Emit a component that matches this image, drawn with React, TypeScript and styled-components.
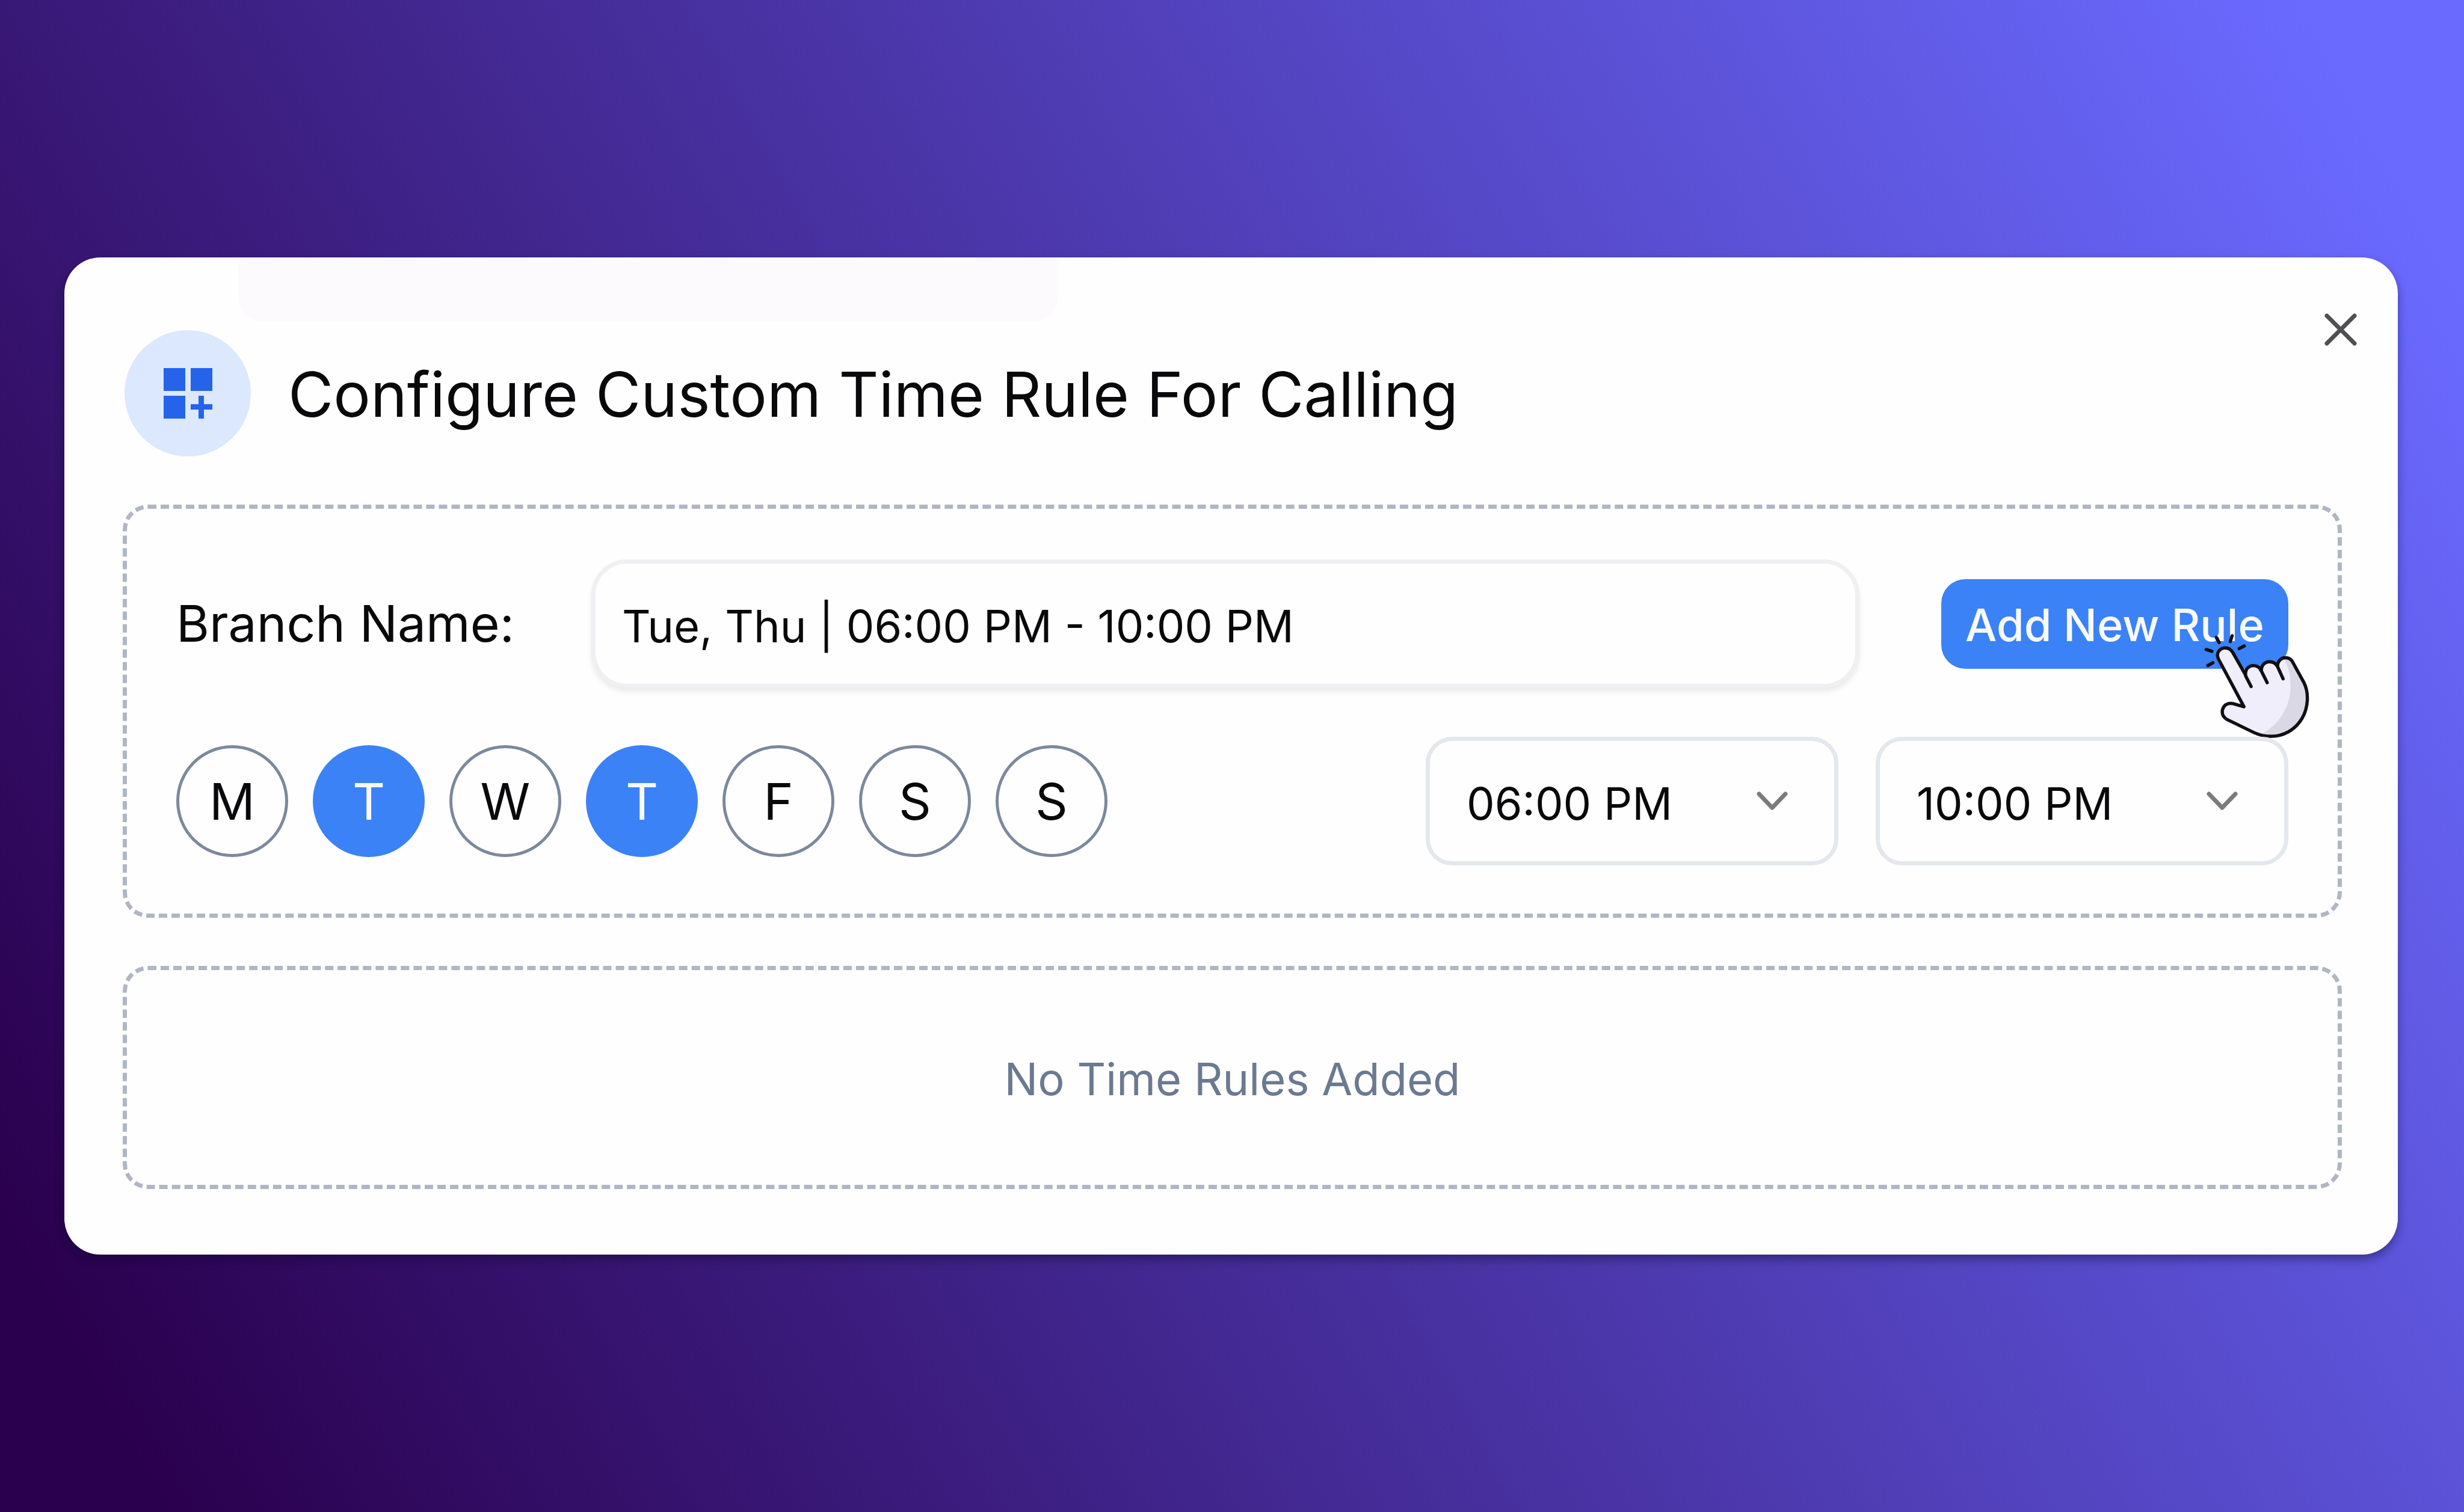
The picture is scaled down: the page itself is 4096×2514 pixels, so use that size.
import { useState } from "react";
import styled, { createGlobalStyle, css } from "styled-components";

const colors = {
  blue: "#3b82f6",
  deepBlue: "#2563eb",
  paleBlue: "#dbe8fe",
  ink: "#09090b",
  slate: "#6b7a90",
  dash: "#b0b6c2",
  line: "#e4e8ec",
  surface: "#fefefe",
};

const GlobalStyle = createGlobalStyle`
  *, *::before, *::after { box-sizing: border-box; }
  body { margin: 0; }
  body, button, input, select { font-family: Inter, "Liberation Sans", sans-serif; }
`;

const Page = styled.main`
  min-height: 100vh;
  display: flex;
  flex-direction: column;
  justify-content: center;
  padding: 80px 110px 80px 107px;
  background: linear-gradient(61deg, #2a004e 5%, #6a6aff 95%);
`;

const Dialog = styled.section`
  position: relative;
  display: flex;
  flex-direction: column;
  gap: 80px;
  padding: 121px 93px 109px 97px;
  border-radius: 60px;
  background: ${colors.surface};
  color: ${colors.ink};
  box-shadow: 0 8px 16px rgba(10, 10, 40, 0.4);
`;

const Tint = styled.div`
  position: absolute;
  top: 0;
  left: 289px;
  width: 1363px;
  height: 106px;
  border-radius: 0 0 40px 40px;
  background: #fcfafd;
`;

const CloseButton = styled.button`
  position: absolute;
  top: 92px;
  right: 67px;
  display: flex;
  padding: 0;
  border: 0;
  background: none;
  color: #505052;
  cursor: pointer;
`;

const Header = styled.header`
  display: flex;
  align-items: center;
  gap: 62px;
  padding: 0 3px;
`;

const Badge = styled.span`
  display: flex;
  align-items: center;
  justify-content: center;
  width: 210px;
  height: 210px;
  border-radius: 50%;
  background: ${colors.paleBlue};
  color: ${colors.deepBlue};
`;

const Title = styled.h1`
  margin: 0;
  padding-top: 4px;
  font-size: 103px;
  line-height: 132px;
  font-weight: 400;
`;

const Panel = styled.div`
  display: flex;
  flex-direction: column;
  gap: 81px;
  padding: 84px 82px 80px;
  border: 7px dashed ${colors.dash};
  border-radius: 42px;
`;

const EmptyPanel = styled(Panel)`
  align-items: center;
  padding: 136px 82px 131px;
`;

const EmptyText = styled.p`
  margin: 0;
  font-size: 74px;
  line-height: 90px;
  color: ${colors.slate};
`;

const Row = styled.div`
  display: flex;
  align-items: center;
  justify-content: space-between;
  gap: 128px;
`;

const Label = styled.label`
  font-size: 84px;
  line-height: 104px;
  white-space: nowrap;
`;

const NameInput = styled.input`
  flex: 1;
  min-width: 0;
  height: 214px;
  padding: 8px 44px 0;
  border: 7px solid #f0f0f3;
  border-radius: 60px;
  outline: none;
  background: ${colors.surface};
  color: ${colors.ink};
  font-size: 74px;
  box-shadow: 0 6px 8px rgba(0, 0, 0, 0.08);
`;

const ButtonWrap = styled.div`
  position: relative;
  display: flex;
  margin-left: 8px;
`;

const AddButton = styled.button`
  height: 149px;
  padding: 4px 40px 0;
  border: 0;
  border-radius: 40px;
  background: ${colors.blue};
  color: #f8fafc;
  font-size: 74px;
  font-weight: 500;
  white-space: nowrap;
  cursor: pointer;
`;

const Pointer = styled.svg`
  position: absolute;
  top: 90px;
  right: -36px;
  width: 177px;
  height: 176px;
  pointer-events: none;
`;

const Days = styled.div`
  display: flex;
  gap: 41px;
`;

const DayButton = styled.button<{ $active: boolean }>`
  width: 186px;
  height: 186px;
  padding: 0;
  border: 5px solid #7c899c;
  border-radius: 50%;
  background: transparent;
  color: ${colors.ink};
  font-size: 84px;
  cursor: pointer;
  ${({ $active }) =>
    $active &&
    css`
      border-color: ${colors.blue};
      background: ${colors.blue};
      color: #f8fafc;
    `}
`;

const Times = styled.div`
  display: flex;
  gap: 62px;
`;

const TimeField = styled.div`
  position: relative;
  display: flex;
  align-items: center;
`;

const TimeSelect = styled.select`
  appearance: none;
  width: 686px;
  height: 214px;
  padding: 8px 160px 0 61px;
  border: 7px solid ${colors.line};
  border-radius: 44px;
  outline: none;
  background: ${colors.surface};
  color: ${colors.ink};
  font-size: 74px;
  cursor: pointer;
`;

const Chevron = styled.svg`
  position: absolute;
  right: 82px;
  width: 56px;
  height: 36px;
  color: #7b7b7d;
  pointer-events: none;
`;

function WidgetsIcon() {
  return (
    <svg width="81" height="84" viewBox="0 0 81 84" fill="currentColor" aria-hidden="true">
      <path d="M0 0H36V38H0zM45 0H81V38H45zM0 46H36V84H0zM58 46h9v14h14v9H67v15h-9V69H45v-9h13z" />
    </svg>
  );
}

function CloseIcon() {
  return (
    <svg width="56" height="56" viewBox="0 0 56 56" fill="none" stroke="currentColor" strokeWidth="7" strokeLinecap="round" aria-hidden="true">
      <path d="M5 5L51 51M51 5L5 51" />
    </svg>
  );
}

function HandPointer() {
  return (
    <Pointer viewBox="410 655 716 710" fill="none" strokeLinecap="round" strokeLinejoin="round" aria-hidden="true">
      <path
        fill="#f0eefa"
        d="M682 1148L512 830C488 785 522 752 556 752C580 752 596 764 606 782L693 935C688 890 720 871 745 871C772 871 790 887 799 908C797 866 826 845 852 845C880 845 898 860 907 876C908 838 935 818 960 818C985 818 1002 832 1011 850L1085 985C1122 1060 1112 1155 1075 1222C1028 1305 945 1347 862 1347C820 1347 780 1336 750 1322L565 1232C520 1200 538 1160 548 1146C562 1128 586 1122 608 1127Z"
      />
      <path
        fill="#dad8e4"
        d="M948 822C985 880 995 950 995 1015C995 1130 930 1265 800 1330C880 1360 1010 1340 1075 1222C1112 1155 1122 1060 1085 985L1011 850C1002 832 985 815 948 822Z"
      />
      <g stroke="#100f14" strokeWidth="22">
        <path d="M682 1148L512 830C488 785 522 752 556 752C580 752 596 764 606 782L693 935C688 890 720 871 745 871C772 871 790 887 799 908C797 866 826 845 852 845C880 845 898 860 907 876C908 838 935 818 960 818C985 818 1002 832 1011 850L1085 985C1122 1060 1112 1155 1075 1222C1028 1305 945 1347 862 1347C820 1347 780 1336 750 1322L565 1232C520 1200 538 1160 548 1146C562 1128 586 1122 608 1127Z" />
        <path d="M693 940L730 1012M799 908L838 986M907 876L945 960" />
        <path d="M496 682L515 716M602 671L590 709M650 757L684 739M428 763L466 775M439 871L473 852" />
      </g>
    </Pointer>
  );
}

const dayNames = ["Monday", "Tuesday", "Wednesday", "Thursday", "Friday", "Saturday", "Sunday"];
const hours = ["06:00 PM", "07:00 PM", "08:00 PM", "09:00 PM", "10:00 PM"];

function TimePicker({ label, value, onChange }: { label: string; value: string; onChange: (v: string) => void }) {
  return (
    <TimeField>
      <TimeSelect aria-label={label} value={value} onChange={(e) => onChange(e.target.value)}>
        {hours.map((h) => (
          <option key={h}>{h}</option>
        ))}
      </TimeSelect>
      <Chevron viewBox="0 0 56 36" fill="none" stroke="currentColor" strokeWidth="7" strokeLinecap="round" strokeLinejoin="round" aria-hidden="true">
        <path d="M6 6L28 29L50 6" />
      </Chevron>
    </TimeField>
  );
}

export default function App() {
  const [active, setActive] = useState<string[]>(["Tuesday", "Thursday"]);
  const [start, setStart] = useState("06:00 PM");
  const [end, setEnd] = useState("10:00 PM");
  const [name, setName] = useState("Tue, Thu | 06:00 PM - 10:00 PM");

  const toggle = (day: string) =>
    setActive((days) => (days.includes(day) ? days.filter((d) => d !== day) : [...days, day]));

  return (
    <>
      <GlobalStyle />
      <Page>
        <Dialog role="dialog" aria-labelledby="dialog-title">
          <Tint />
          <CloseButton type="button" aria-label="Close">
            <CloseIcon />
          </CloseButton>
          <Header>
            <Badge>
              <WidgetsIcon />
            </Badge>
            <Title id="dialog-title">Configure Custom Time Rule For Calling</Title>
          </Header>
          <Panel>
            <Row>
              <Label htmlFor="branch-name">Branch Name:</Label>
              <NameInput id="branch-name" type="text" value={name} onChange={(e) => setName(e.target.value)} />
              <ButtonWrap>
                <AddButton type="button">Add New Rule</AddButton>
                <HandPointer />
              </ButtonWrap>
            </Row>
            <Row>
              <Days role="group" aria-label="Days">
                {dayNames.map((day) => (
                  <DayButton
                    key={day}
                    type="button"
                    aria-label={day}
                    aria-pressed={active.includes(day)}
                    $active={active.includes(day)}
                    onClick={() => toggle(day)}
                  >
                    {day[0]}
                  </DayButton>
                ))}
              </Days>
              <Times>
                <TimePicker label="Start time" value={start} onChange={setStart} />
                <TimePicker label="End time" value={end} onChange={setEnd} />
              </Times>
            </Row>
          </Panel>
          <EmptyPanel>
            <EmptyText>No Time Rules Added</EmptyText>
          </EmptyPanel>
        </Dialog>
      </Page>
    </>
  );
}
